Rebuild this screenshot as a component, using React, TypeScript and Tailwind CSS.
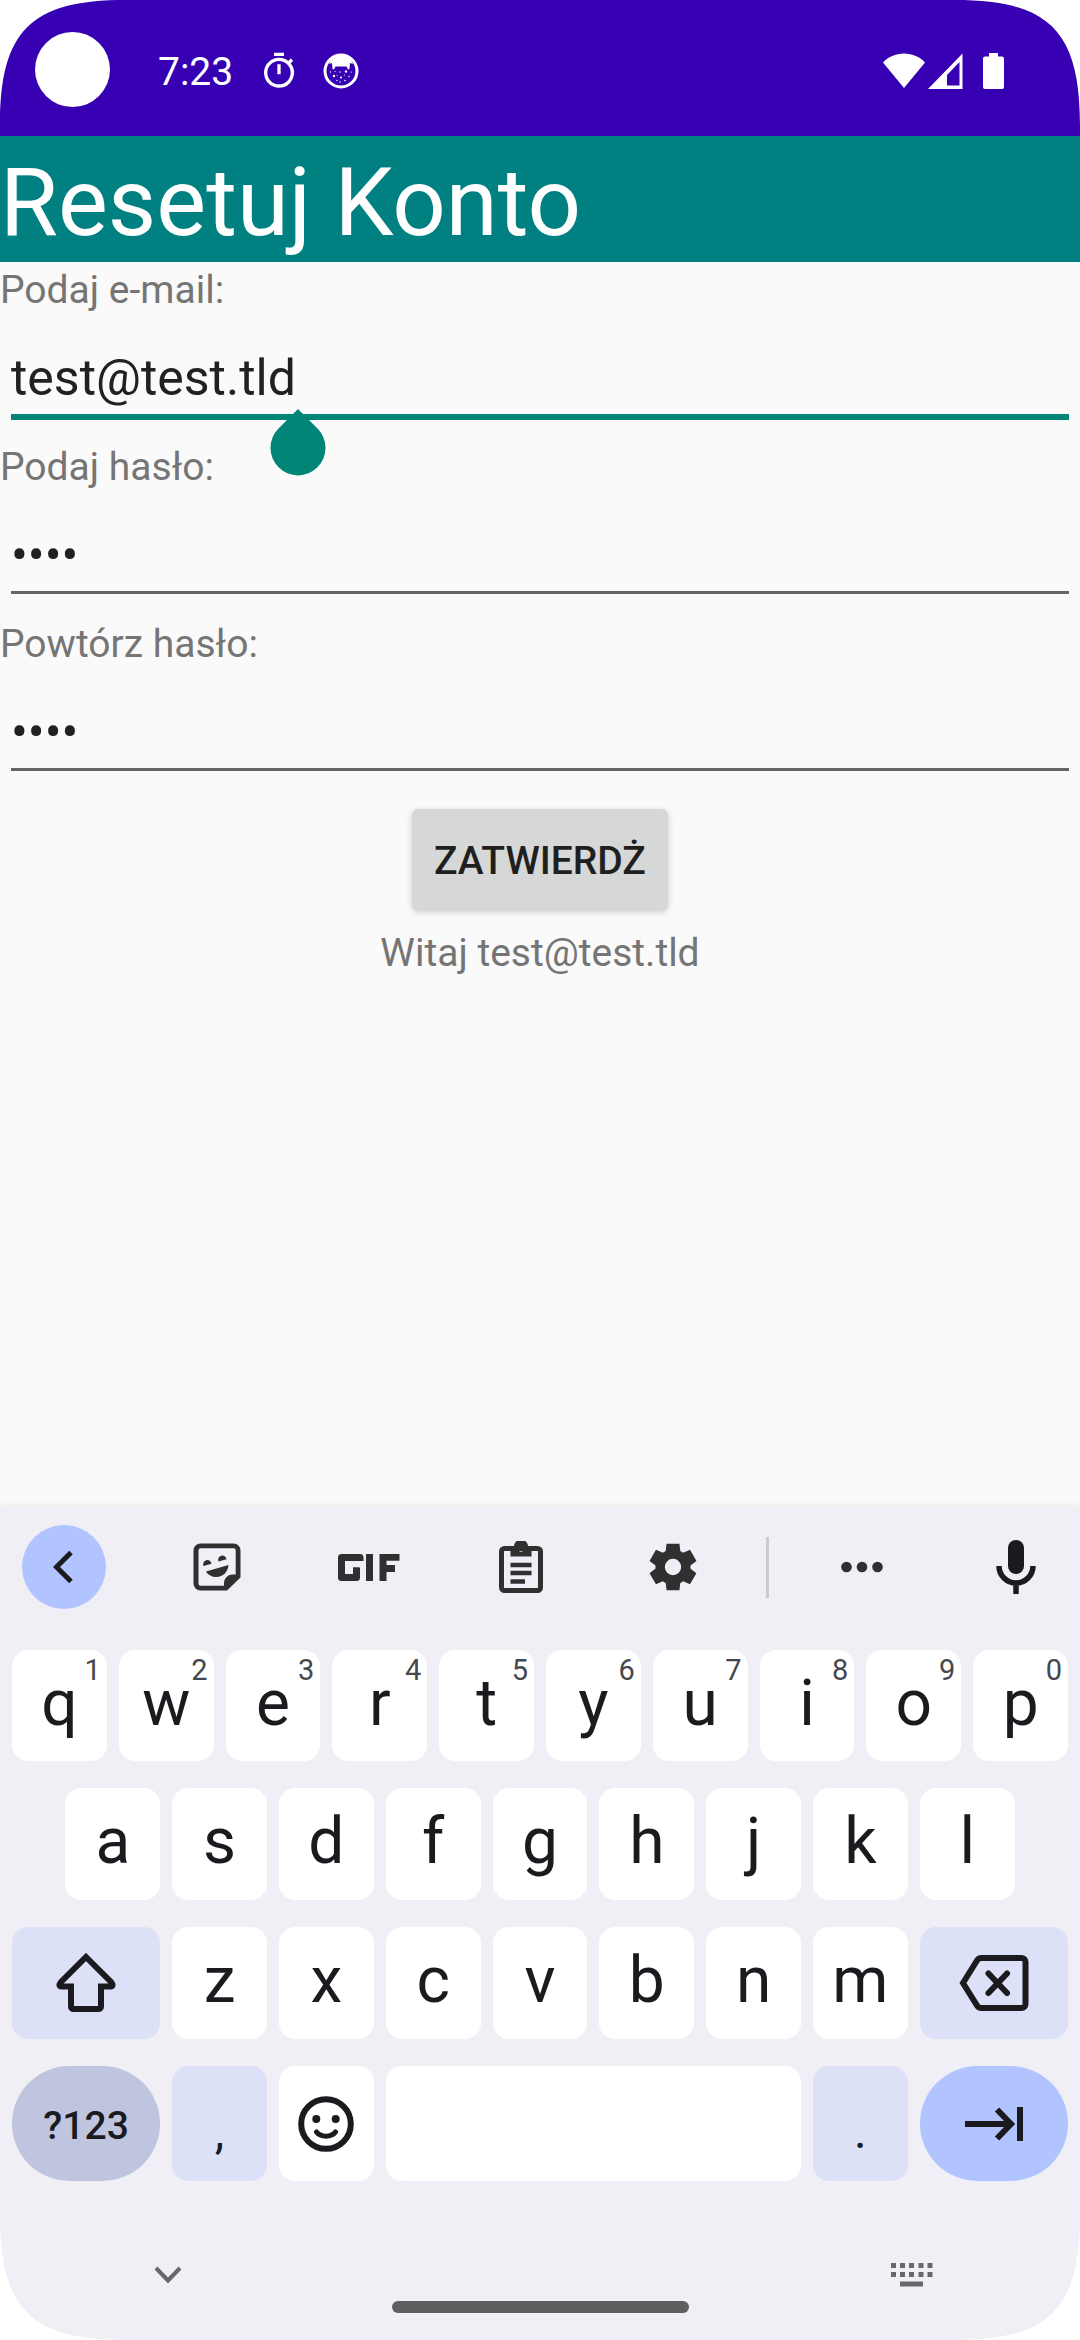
import React, { useState } from "react";

type IconProps = { className?: string };

/* ---------- Status bar icons ---------- */

const TimerIcon = () => (
  <svg viewBox="0 0 24 24" className="size-10 fill-white" aria-hidden="true">
    <path d="M15 1H9v2h6V1zm-4 13h2V8h-2v6zm8.03-6.61 1.42-1.42c-.43-.51-.9-.99-1.41-1.41l-1.42 1.42A8.962 8.962 0 0 0 12 4c-4.97 0-9 4.03-9 9s4.02 9 9 9a8.994 8.994 0 0 0 7.03-14.61zM12 20c-3.87 0-7-3.13-7-7s3.13-7 7-7 7 3.13 7 7-3.13 7-7 7z" />
  </svg>
);

const CatIcon = () => (
  <svg viewBox="0 0 36 36" className="size-9" aria-hidden="true">
    <circle cx="18" cy="18" r="16" fill="none" stroke="#fff" strokeWidth="3" />
    <path
      fill="#fff"
      d="M6 11C8 5 12 2.500 18 2.500S28 5 30 11L27 10 26.500 16 25 16.500 23.500 13.500H12.500L11 16.500 9.500 16 9 10z"
    />
    <g fill="#fff">
      <circle cx="11" cy="23" r="1.200" />
      <circle cx="18" cy="24.500" r="1" />
      <circle cx="23" cy="18.500" r="1.200" />
      <circle cx="26" cy="23.500" r=".7" />
      <circle cx="17" cy="19" r=".7" />
      <circle cx="7.500" cy="19" r=".7" />
      <circle cx="12" cy="18.500" r=".6" />
      <circle cx="14" cy="27.500" r=".7" />
      <circle cx="17" cy="29" r=".7" />
      <circle cx="22" cy="27.500" r=".8" />
      <circle cx="28.500" cy="19" r=".6" />
      <circle cx="14" cy="22.500" r=".5" />
      <circle cx="21.500" cy="22" r=".6" />
    </g>
  </svg>
);

const WifiIcon = () => (
  <svg viewBox="0 0 42 36" className="h-9 w-[42px] fill-white" aria-hidden="true">
    <path d="M21 35 0 9.500C5 4 12.500.500 21 .500S37 4 42 9.500z" />
  </svg>
);

const SignalIcon = () => (
  <svg viewBox="0 0 35 36" className="h-9 w-[35px] fill-white" aria-hidden="true">
    <path fillRule="evenodd" d="M0 36 34.500.500V36zM31.500 9 19 22V32.500H31.500z" />
  </svg>
);

const BatteryIcon = () => (
  <svg viewBox="0 0 21 36" className="h-9 w-[21px] fill-white" aria-hidden="true">
    <path d="M6 0h9v3.500h4a2 2 0 0 1 2 2V34a2 2 0 0 1-2 2H2a2 2 0 0 1-2-2V5.500a2 2 0 0 1 2-2h4z" />
  </svg>
);

/* ---------- Keyboard icons ---------- */

const ChevronLeftIcon = () => (
  <svg viewBox="0 0 20 34" className="h-[34px] w-5" fill="none" stroke="#1b1b1f" strokeWidth="5" aria-hidden="true">
    <path d="M18 2.500 3.500 17 18 31.500" />
  </svg>
);

const StickerIcon = () => (
  <svg viewBox="0 0 48 48" className="size-12" fill="#303030" aria-hidden="true">
    <path
      fillRule="evenodd"
      d="M7.500.500h33a7 7 0 0 1 7 7v27L34 47.500H7.500a7 7 0 0 1-7-7v-33a7 7 0 0 1 7-7zM7.500 5.200a2 2 0 0 0-2 2v33.600a2 2 0 0 0 2 2H31V40a8.500 8.500 0 0 1 8.500-8.500H42.700V7.200a2 2 0 0 0-2-2z"
    />
    <path d="M10.500 23a4.200 4.200 0 1 1 8-2.200zM25.500 18.500a4.200 4.200 0 1 1 8-2.200zM13 28.500 35.500 22C35 29 30 34 23.500 34 19 34 15 32 13 28.500z" />
  </svg>
);

const GifIcon = () => (
  <svg viewBox="0 0 62 27" className="h-[27px] w-[62px]" fill="none" stroke="#303030" strokeWidth="7" aria-hidden="true">
    <path strokeLinejoin="round" d="M22 7V3.500H3.500v20H18.500V13.500" />
    <path strokeWidth="5" d="M15 16h6" />
    <path d="M31.500 0v27M45 0v27M42 3.200h19.500M45 14.500h12" />
  </svg>
);

const ClipboardIcon = () => (
  <svg viewBox="0 0 44 52" className="h-[52px] w-11" aria-hidden="true">
    <rect x="2.500" y="7.500" width="39" height="42" rx="3" fill="none" stroke="#303030" strokeWidth="5" />
    <path
      fill="#303030"
      fillRule="evenodd"
      d="M11.500 5.500H15a7 7 0 0 1 14 0h3.500V15.500h-21zM22 5.200a2.800 2.800 0 1 0 0 5.600 2.800 2.800 0 0 0 0-5.600z"
    />
    <path d="M11.500 24h21M11.500 32h21M11.500 40.500h14.500" stroke="#303030" strokeWidth="4.500" />
  </svg>
);

const GearIcon = () => (
  <svg viewBox="0 0 24 24" className="size-14" fill="#303030" aria-hidden="true">
    <path d="m9.250 22-.4-3.200q-.325-.125-.612-.3-.288-.175-.563-.375L4.700 19.375l-2.750-4.750 2.575-1.950Q4.500 12.500 4.500 12.337v-.675q0-.162.025-.337L1.950 9.375l2.750-4.750 2.975 1.250q.275-.2.575-.375.300-.175.600-.3L9.250 2h5.500l.4 3.200q.325.125.613.3.287.175.562.375l2.975-1.250 2.750 4.750-2.575 1.950q.025.175.025.337v.675q0 .163-.05.338l2.575 1.950-2.750 4.750-2.950-1.250q-.275.2-.575.375-.3.175-.6.3l-.4 3.200Zm2.750-6.500a3.500 3.500 0 1 0 0-7 3.500 3.500 0 0 0 0 7Z" />
  </svg>
);

const MoreIcon = () => (
  <svg viewBox="0 0 42 12" className="h-3 w-[42px]" fill="#303030" aria-hidden="true">
    <circle cx="5.500" cy="6" r="5.300" />
    <circle cx="21" cy="6" r="5.300" />
    <circle cx="36.500" cy="6" r="5.300" />
  </svg>
);

const MicIcon = () => (
  <svg viewBox="0 0 40 54" className="h-[54px] w-10" aria-hidden="true">
    <rect x="12" y="0" width="16" height="34" rx="8" fill="#1b1b1f" />
    <path d="M3 26a17 17 0 0 0 34 0M20 43v11" fill="none" stroke="#1b1b1f" strokeWidth="5.500" />
  </svg>
);

const ShiftIcon = () => (
  <svg viewBox="0 0 62 62" className="size-[62px]" fill="none" stroke="#1b1b1f" strokeWidth="6" aria-hidden="true">
    <path d="M31 5 56.500 30.500C58.500 33 57.500 34.500 55.500 34.500H46V54.500a2.500 2.500 0 0 1-2.500 2.500H18.500A2.500 2.500 0 0 1 16 54.500V34.500H6.500C4.500 34.500 3.500 33 5.500 30.500z" />
  </svg>
);

const BackspaceIcon = () => (
  <svg
    viewBox="0 0 70 56"
    className="h-14 w-[70px]"
    fill="none"
    stroke="#1b1b1f"
    strokeWidth="6"
    strokeLinecap="round"
    aria-hidden="true"
  >
    <path d="M4 28 18 5.500Q19.500 3 22.500 3H62.500a4 4 0 0 1 4 4V49a4 4 0 0 1-4 4H22.500Q19.500 53 18 50.500z" />
    <path d="M29.500 18.500 48 38M48 18.500 29.500 38" />
  </svg>
);

const SmileIcon = () => (
  <svg viewBox="0 0 56 56" className="size-14" fill="#1b1b1f" aria-hidden="true">
    <circle cx="28" cy="28" r="24.800" fill="none" stroke="#1b1b1f" strokeWidth="6" />
    <circle cx="18.300" cy="23" r="4" />
    <circle cx="37.700" cy="23" r="4" />
    <path d="M18.500 36C22.500 41.500 33.500 41.500 37.500 36" fill="none" stroke="#1b1b1f" strokeWidth="5" strokeLinecap="round" />
  </svg>
);

const TabIcon = () => (
  <svg viewBox="0 0 58 34" className="h-[34px] w-[58px]" fill="none" stroke="#1b1b1f" strokeWidth="6" aria-hidden="true">
    <path d="M0 17H44M32 2.500 46 17 32 31.500M55 0v34" />
  </svg>
);

const HideIcon = () => (
  <svg viewBox="0 0 28 18" className="h-[18px] w-7" fill="none" stroke="#68686a" strokeWidth="4" aria-hidden="true">
    <path d="M2 2 14 14.500 26 2" />
  </svg>
);

const SwitchKeyboardIcon = () => (
  <svg viewBox="0 0 42 24" className="h-6 w-[42px]" fill="#68686a" aria-hidden="true">
    {[0, 9, 18, 27.5, 36.5].map((x) => (
      <React.Fragment key={x}>
        <rect x={x} y="0" width="5" height="5" />
        <rect x={x} y="9" width="5" height="5" />
      </React.Fragment>
    ))}
    <rect x="9" y="18.500" width="23" height="5" />
  </svg>
);

/* ---------- Rounded display corner ---------- */

const Corner = ({ className }: IconProps) => (
  <svg viewBox="0 0 125 125" className={`absolute size-[125px] fill-white ${className}`} aria-hidden="true">
    <path d="M0 0H125C31 0 0 31 0 125z" />
  </svg>
);

/* ---------- Form ---------- */

type FieldProps = {
  id: string;
  label: string;
  type: string;
  initial: string;
  active?: boolean;
};

function Field({ id, label, type, initial, active }: FieldProps) {
  const [value, setValue] = useState(initial);
  return (
    <div className="flex h-[177px] flex-col">
      <label htmlFor={id} className="h-[51px] text-[39px] leading-[57px] text-[#757575]">
        {label}
      </label>
      <div className="relative mx-[11px] h-[107px]">
        <input
          id={id}
          type={type}
          value={value}
          onChange={(e) => setValue(e.target.value)}
          className={
            active
              ? "h-full w-full border-b-6 border-[#008577] bg-transparent pt-[29px] text-[50px] leading-[66px] text-[#212121] outline-none"
              : "h-[104px] w-full border-b-3 border-[#656565] bg-transparent pt-[28px] text-[50px] leading-[66px] text-[#212121] outline-none"
          }
        />
        {active && (
          <svg viewBox="0 0 56 67" className="absolute top-[96px] left-[259px] h-[67px] w-14 fill-[#008577]" aria-hidden="true">
            <path d="M28 0 47.500 19.500A27.500 27.500 0 1 1 8.500 19.500z" />
          </svg>
        )}
      </div>
    </div>
  );
}

/* ---------- Keyboard ---------- */

type KeyProps = {
  label: string;
  span?: string;
  look?: string;
  hint?: string;
  children?: React.ReactNode;
};

function Key({ label, span = "col-span-2", look = "rounded-2xl bg-white", hint, children }: KeyProps) {
  return (
    <div className={`flex px-1.5 ${span}`}>
      <button
        type="button"
        aria-label={children ? label : undefined}
        className={`relative flex w-full items-center justify-center ${look}`}
      >
        {children ?? <span className="pb-1 text-[64px] leading-[76px]">{label}</span>}
        {hint && <span className="absolute top-1 right-1.5 text-[29px] leading-8 text-[#46474c]">{hint}</span>}
      </button>
    </div>
  );
}

const topRow: [string, string][] = [
  ["q", "1"],
  ["w", "2"],
  ["e", "3"],
  ["r", "4"],
  ["t", "5"],
  ["y", "6"],
  ["u", "7"],
  ["i", "8"],
  ["o", "9"],
  ["p", "0"],
];

function ToolButton({ label, children }: { label: string; children: React.ReactNode }) {
  return (
    <button type="button" aria-label={label} className="flex h-full flex-1 items-center justify-center">
      {children}
    </button>
  );
}

function Keyboard() {
  return (
    <section
      aria-label="Klawiatura"
      className="flex flex-col bg-[#f0eff6] text-[#1b1b1f] shadow-[0_-1px_8px_rgba(0,0,0,0.08)]"
    >
      <div className="mt-[18px] flex h-[84px] items-center px-[22px]">
        <button
          type="button"
          aria-label="Wstecz"
          className="mr-[35px] flex size-[84px] items-center justify-center rounded-full bg-[#b1c4ff] pr-0.5"
        >
          <ChevronLeftIcon />
        </button>
        <ToolButton label="Naklejki">
          <StickerIcon />
        </ToolButton>
        <ToolButton label="GIF">
          <GifIcon />
        </ToolButton>
        <ToolButton label="Schowek">
          <ClipboardIcon />
        </ToolButton>
        <ToolButton label="Ustawienia">
          <GearIcon />
        </ToolButton>
        <div className="mx-[17px] h-[61px] w-[3px] bg-[#cbcacf]" />
        <ToolButton label="Więcej">
          <MoreIcon />
        </ToolButton>
        <button type="button" aria-label="Mikrofon" className="ml-9 flex size-[84px] items-center justify-center">
          <MicIcon />
        </button>
      </div>

      <div className="mt-[41px] flex flex-col gap-[27px] px-1.5">
        <div className="grid h-[111px] grid-cols-20">
          {topRow.map(([letter, digit]) => (
            <Key key={letter} label={letter} hint={digit} />
          ))}
        </div>
        <div className="grid h-28 grid-cols-20">
          <div />
          {"asdfghjkl".split("").map((letter) => (
            <Key key={letter} label={letter} />
          ))}
        </div>
        <div className="grid h-28 grid-cols-20">
          <Key label="Shift" span="col-span-3" look="rounded-2xl bg-[#dde1f8]">
            <ShiftIcon />
          </Key>
          {"zxcvbnm".split("").map((letter) => (
            <Key key={letter} label={letter} />
          ))}
          <Key label="Usuń" span="col-span-3" look="rounded-2xl bg-[#dde1f8]">
            <BackspaceIcon />
          </Key>
        </div>
        <div className="grid h-[115px] grid-cols-20">
          <Key label="Symbole" span="col-span-3" look="rounded-full bg-[#c0c5df]">
            <span className="pt-1 text-[39px] leading-[48px] font-medium">?123</span>
          </Key>
          <Key label="Przecinek" look="rounded-2xl bg-[#dde1f8]">
            <span className="pt-4 text-[48px] leading-[56px]">,</span>
          </Key>
          <Key label="Emoji">
            <SmileIcon />
          </Key>
          <Key label="Spacja" span="col-span-8">
            <span />
          </Key>
          <Key label="Kropka" look="rounded-2xl bg-[#dde1f8]">
            <span className="pt-4 text-[48px] leading-[56px]">.</span>
          </Key>
          <Key label="Dalej" span="col-span-3" look="rounded-full bg-[#b1c4ff]">
            <TabIcon />
          </Key>
        </div>
      </div>

      <div className="grid h-[159px] grid-cols-3 justify-items-center px-[146px] pt-[82px]">
        <button type="button" aria-label="Ukryj klawiaturę" className="flex h-6 w-11 items-center justify-center justify-self-start">
          <HideIcon />
        </button>
        <div className="mt-[38px] h-3 w-[297px] rounded-full bg-[#5f5f61]" />
        <button type="button" aria-label="Zmień klawiaturę" className="flex h-6 w-11 items-center justify-center justify-self-end">
          <SwitchKeyboardIcon />
        </button>
      </div>
    </section>
  );
}

/* ---------- Screen ---------- */

export default function App() {
  return (
    <div className="relative flex min-h-screen flex-col overflow-hidden bg-[#fafafa] font-['Roboto',sans-serif]">
      <div className="flex h-[136px] items-center bg-[#3700b3] pr-[76px] pl-[35px] text-white">
        <div className="mt-[3px] mr-12 size-[75px] rounded-full bg-white" />
        <time className="mr-[26px] pt-2 text-[39px] leading-[46px]">7:23</time>
        <div className="flex flex-1 items-center gap-6 pt-1.5">
          <TimerIcon />
          <CatIcon />
        </div>
        <div className="flex items-center gap-[3px] pt-1.5">
          <WifiIcon />
          <SignalIcon />
          <div className="ml-[17px]">
            <BatteryIcon />
          </div>
        </div>
      </div>

      <header className="h-[126px] bg-[#008080]">
        <h1 className="pt-1 text-[94px] leading-[126px] text-white">Resetuj Konto</h1>
      </header>

      <form className="flex flex-1 flex-col" onSubmit={(e) => e.preventDefault()}>
        <Field id="email" label="Podaj e-mail:" type="text" initial="test@test.tld" active />
        <Field id="password" label="Podaj hasło:" type="password" initial="test" />
        <Field id="repeat" label="Powtórz hasło:" type="password" initial="test" />
        <button
          type="submit"
          className="mt-4 h-[101px] self-center rounded-md bg-[#d6d7d7] px-[22px] pt-0.5 text-[39px] leading-[46px] font-medium text-[#1f1f1f] shadow-[0_2px_6px_rgba(0,0,0,0.2)]"
        >
          ZATWIERDŻ
        </button>
        <output className="mt-[18px] self-center text-[39px] leading-[50px] text-[#757575]">Witaj test@test.tld</output>
      </form>

      <Keyboard />

      <Corner className="top-0 left-0" />
      <Corner className="top-0 right-0 rotate-90" />
      <Corner className="right-0 bottom-0 rotate-180" />
      <Corner className="bottom-0 left-0 -rotate-90" />
    </div>
  );
}
